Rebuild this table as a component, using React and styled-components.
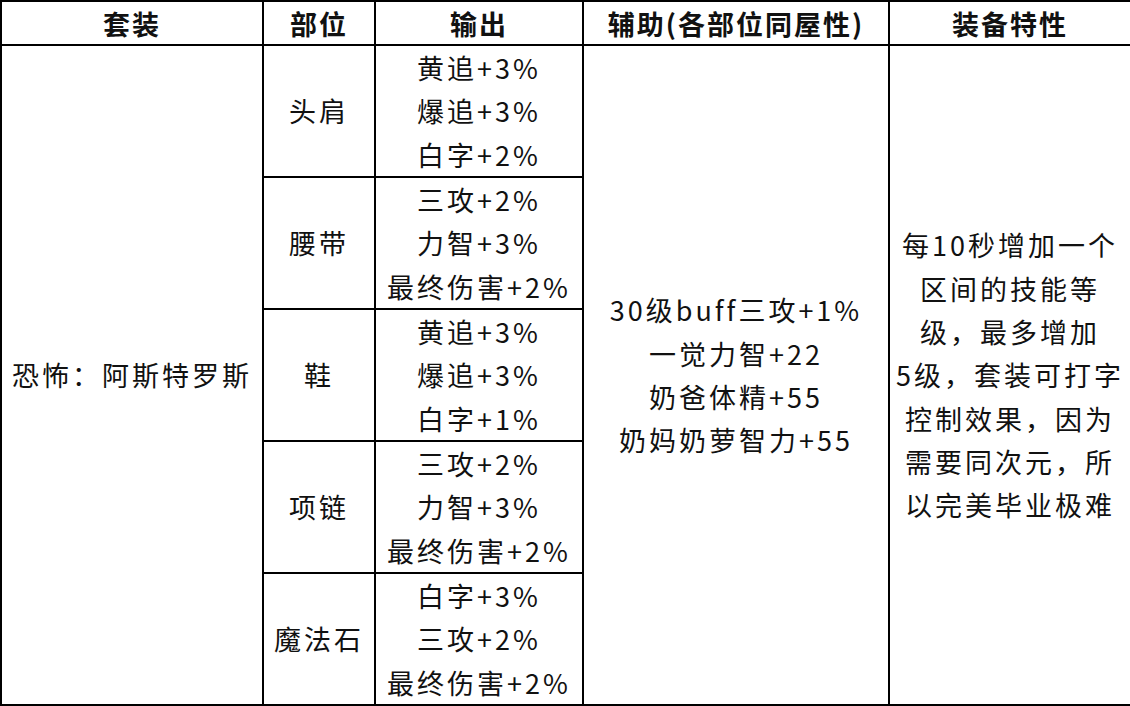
import React from "react";
import styled, { createGlobalStyle } from "styled-components";

const Global = createGlobalStyle`
  html, body { margin: 0; padding: 0; background: #fff; }
  body { font-family: "Noto Sans CJK SC", "Noto Sans", sans-serif; color: #111; }
`;

const Table = styled.table`
  width: 1130px;
  border-collapse: collapse;
  table-layout: fixed;
  background: #fff;
`;

const Th = styled.th`
  border: 2px solid #000;
  height: 42px;
  padding: 0;
  font-size: 27px;
  font-weight: 700;
  letter-spacing: 2px;
  text-align: center;
  vertical-align: middle;
  line-height: 1;
`;

const Td = styled.td`
  border: 2px solid #000;
  padding: 0;
  font-size: 27px;
  letter-spacing: 3px;
  text-align: center;
  vertical-align: middle;
  white-space: nowrap;
`;

const Line = styled.div`
  height: 43.333px;
  line-height: 43.333px;
`;

const groups = [
  { part: "头肩", lines: ["黄追+3%", "爆追+3%", "白字+2%"] },
  { part: "腰带", lines: ["三攻+2%", "力智+3%", "最终伤害+2%"] },
  { part: "鞋", lines: ["黄追+3%", "爆追+3%", "白字+1%"] },
  { part: "项链", lines: ["三攻+2%", "力智+3%", "最终伤害+2%"] },
  { part: "魔法石", lines: ["白字+3%", "三攻+2%", "最终伤害+2%"] },
];

const support = ["30级buff三攻+1%", "一觉力智+22", "奶爸体精+55", "奶妈奶萝智力+55"];
const trait = [
  "每10秒增加一个",
  "区间的技能等",
  "级，最多增加",
  "5级，套装可打字",
  "控制效果，因为",
  "需要同次元，所",
  "以完美毕业极难",
];

export default function App() {
  return (
    <>
      <Global />
      <Table>
        <colgroup>
          <col style={{ width: 262 }} />
          <col style={{ width: 112 }} />
          <col style={{ width: 208 }} />
          <col style={{ width: 306 }} />
          <col style={{ width: 242 }} />
        </colgroup>
        <thead>
          <tr>
            <Th>套装</Th>
            <Th>部位</Th>
            <Th>输出</Th>
            <Th>辅助(各部位同屋性)</Th>
            <Th>装备特性</Th>
          </tr>
        </thead>
        <tbody>
          {groups.map((g, i) => (
            <tr key={g.part}>
              {i === 0 && <Td rowSpan={5}>恐怖：阿斯特罗斯</Td>}
              <Td>{g.part}</Td>
              <Td>
                {g.lines.map((l, j) => (
                  <Line key={j}>{l}</Line>
                ))}
              </Td>
              {i === 0 && (
                <Td rowSpan={5}>
                  {support.map((l) => (
                    <Line key={l}>{l}</Line>
                  ))}
                </Td>
              )}
              {i === 0 && (
                <Td rowSpan={5}>
                  {trait.map((l) => (
                    <Line key={l}>{l}</Line>
                  ))}
                </Td>
              )}
            </tr>
          ))}
        </tbody>
      </Table>
    </>
  );
}
